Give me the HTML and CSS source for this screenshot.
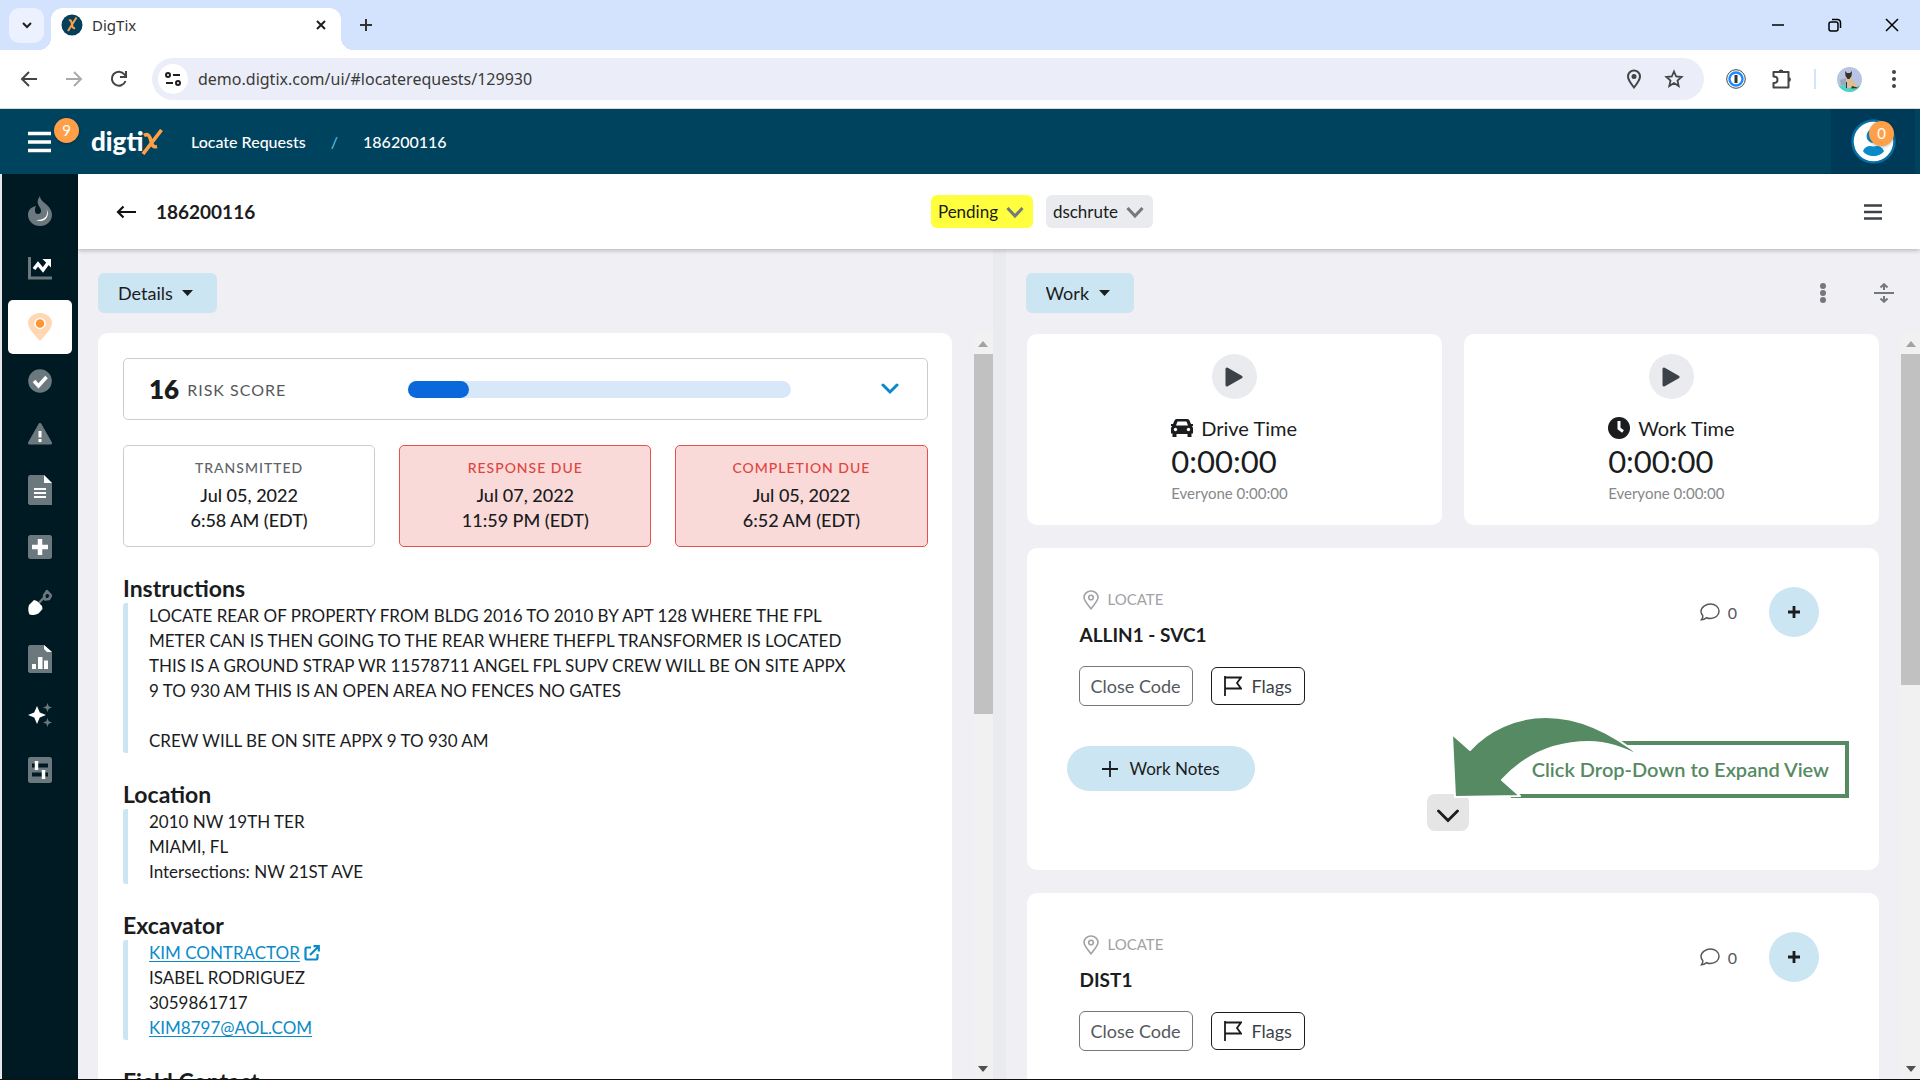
FILE: index.html
```
<!DOCTYPE html>
<html lang="en">
<head>
	<meta charset="UTF-8">
	<title>DigTix</title>
	<link rel="stylesheet" href="styles.css">
</head>
<body>
	<!-- browser window -->
	<div class="tabs">
		<button class="tab-search" aria-label="Search tabs"><svg width="12" height="8" viewBox="0 0 12 8"><path d="M2 2l4 4 4-4" fill="none" stroke="#1f1f1f" stroke-width="2"/></svg></button>
		<div class="tab">
			<svg width="22" height="22" viewBox="0 0 22 22"><circle cx="11" cy="11" r="10.500" fill="#04405a"/><path d="M15.500 3.500L7 17M8 6.500c2-1 2.500 1 3 4s1.500 4 3 3.500" fill="none" stroke="#ff9f47" stroke-width="2"/></svg>
			<span class="tab-name">DigTix</span>
			<button aria-label="Close tab"><svg width="12" height="12" viewBox="0 0 12 12"><path d="M2 2l8 8M10 2l-8 8" stroke="#1f1f1f" stroke-width="2"/></svg></button>
		</div>
		<button class="tab-new" aria-label="New tab"><svg width="14" height="14" viewBox="0 0 14 14"><path d="M7 1v12M1 7h12" stroke="#333" stroke-width="2"/></svg></button>
		<div class="win">
			<button aria-label="Minimize"><svg width="14" height="14" viewBox="0 0 14 14"><path d="M1 7h12" stroke="#000" stroke-width="1.500"/></svg></button>
			<button aria-label="Restore"><svg width="14" height="14" viewBox="0 0 14 14"><rect x="1" y="4" width="9" height="9" rx="2" fill="none" stroke="#000" stroke-width="1.500"/><path d="M4 1.500h5.500a3 3 0 0 1 3 3V10" fill="none" stroke="#000" stroke-width="1.500"/></svg></button>
			<button aria-label="Close"><svg width="14" height="14" viewBox="0 0 14 14"><path d="M1 1l12 12M13 1L1 13" stroke="#000" stroke-width="1.500"/></svg></button>
		</div>
	</div>
	<div class="toolbar">
		<button aria-label="Back"><svg width="18" height="18" viewBox="0 0 18 18"><path d="M17 9H2.500M9 2L2 9l7 7" fill="none" stroke="#444" stroke-width="2"/></svg></button>
		<button aria-label="Forward"><svg width="18" height="18" viewBox="0 0 18 18"><path d="M1 9h14.500M9 2l7 7-7 7" fill="none" stroke="#aaa" stroke-width="2"/></svg></button>
		<button aria-label="Reload"><svg width="18" height="18" viewBox="0 0 18 18"><path d="M15.500 11A7 7 0 1 1 14.500 4.500L16 6.500M16 1v6h-6" fill="none" stroke="#444" stroke-width="2"/></svg></button>
		<div class="omni">
			<span class="site"><svg width="16" height="16" viewBox="0 0 16 16"><g fill="none" stroke="#1f1f1f" stroke-width="2"><circle cx="3" cy="4" r="2"/><path d="M8 4h7M1 12h7"/><circle cx="13" cy="12" r="2"/></g></svg></span>
			<input type="text" aria-label="Address" value="demo.digtix.com/ui/#locaterequests/129930">
			<button aria-label="Location"><svg width="16" height="20" viewBox="0 0 16 20"><path d="M8 18.500C4 13.500 2 10.500 2 7.500a6 6 0 0 1 12 0c0 3-2 6-6 11z" fill="none" stroke="#444" stroke-width="2"/><circle cx="8" cy="7.500" r="2.500" fill="#444"/></svg></button>
			<button aria-label="Bookmark"><svg width="20" height="20" viewBox="0 0 20 20"><path d="M10 2.500l2.200 5 5.400.5-4.100 3.600 1.200 5.400-4.700-2.900L5.300 17l1.200-5.400L2.400 8l5.400-.5z" fill="none" stroke="#444" stroke-width="1.800"/></svg></button>
		</div>
		<div class="exts">
			<button aria-label="1Password"><svg width="20" height="20" viewBox="0 0 20 20"><circle cx="10" cy="10" r="9.300" fill="#fff" stroke="#444"/><circle cx="10" cy="10" r="6.500" fill="#fff" stroke="#1a8cff" stroke-width="2.400"/><path d="M10 6v8" stroke="#333" stroke-width="3"/></svg></button>
			<button class="puzzle" aria-label="Extensions"><svg width="22" height="22" viewBox="0 0 22 22"><path d="M2.500 4h15v15.500h-15v-4.500c3 0 4-1.500 4-3.300S5.500 8.500 2.500 8.500z" fill="none" stroke="#444" stroke-width="2" stroke-linejoin="round"/><path d="M7.500 4a2.500 2.500 0 0 1 5 0zM17.500 9a2.500 2.500 0 0 1 0 5z" fill="#444"/></svg></button>
			<span class="line"></span>
			<svg width="25" height="25" viewBox="0 0 25 25"><clipPath id="face"><circle cx="12.500" cy="12.500" r="12.500"/></clipPath><g clip-path="url(#face)"><path fill="#b9c4e3" d="M0 0h25v25H0z"/><path fill="#4ed3c8" d="M0 19l8-1 17 1v6H0z"/><path fill="#9da6bc" d="M3 13l6-2v7H4z"/><path fill="#d9bf94" d="M9 8h5l1 5 4 3 2 5H10z"/><path fill="#3b312b" d="M8 4l2 2h3l2-2-.5 5-2 3h-2L8.500 9zM15 19l7 2-8 .5zM9 15h1v6H9z"/></g></svg>
			<button class="dots" aria-label="Menu"><svg width="6" height="20" viewBox="0 0 6 20" fill="#444"><circle cx="3" cy="3" r="2"/><circle cx="3" cy="10" r="2"/><circle cx="3" cy="17" r="2"/></svg></button>
		</div>
	</div>

	<!-- app header -->
	<header class="head">
		<button class="nav-btn" aria-label="Navigation">
			<svg width="23" height="22" viewBox="0 0 23 22"><path d="M0 2.500h23M0 11h23M0 19.500h23" stroke="#fff" stroke-width="3.600"/></svg>
			<span class="badge">9</span>
		</button>
		<a class="logo" href="#" aria-label="digtix">digti<svg width="22" height="26" viewBox="0 0 22 26"><path d="M20.500 1L2 25M3 6.500c4.500-2.500 6 1 7 5.500s2 6.500 6 5.500" fill="none" stroke="#ff9f47" stroke-width="3.600"/></svg></a>
		<nav class="crumbs">
			<a href="#">Locate Requests</a>
			<span class="slash">/</span>
			<a href="#">186200116</a>
		</nav>
		<button class="me" aria-label="Account">
			<svg width="45" height="45" viewBox="0 0 45 45"><circle cx="22.500" cy="22.500" r="21" fill="#fff" stroke="#0370a3" stroke-width="2.500"/><circle cx="22.500" cy="17" r="7" fill="#0a8bc9"/><path d="M12 32c2-4.500 6-6 10.500-4.500C27 26 31 27.500 33 32c-2 3.500-6 5-10.500 5S14 35.500 12 32z" fill="#0a8bc9"/></svg>
			<span class="badge">0</span>
		</button>
	</header>

	<div class="app">
		<nav class="side">
			<a href="#" aria-label="Hot"><svg width="24" height="30" viewBox="0 0 24 30"><path d="M12 0c-2 3-3 5-2 8 1 3 3 4 3 7a3 3 0 0 1-6 0c0-2 0-3 1-5-5 1-8 4-8 9a12 11 0 0 0 24 0c0-4-2-7-5-10S12 4 12 0z" fill="#6b797e"/><path d="M18.500 13c2 6-1 11.500-10.500 11 8 4 15-4 10.500-11z" fill="#fff"/></svg></a>
			<a href="#" aria-label="Trends"><svg width="24" height="24" viewBox="0 0 24 24"><path d="M1.500 1v21H24" fill="none" stroke="#6b797e" stroke-width="3"/><path d="M6 13l4-5 5 6 5-7" fill="none" stroke="#fff" stroke-width="3.500"/><path d="M14.500 3H23v8.500z" fill="#fff"/></svg></a>
			<a class="on" href="#" aria-label="Locates"><svg width="24" height="28" viewBox="0 0 24 28"><path d="M12 28C4 19 0 15 0 10a12 10 0 0 1 24 0c0 5-4 9-12 18z" fill="#ffd7b3"/><circle cx="12" cy="10.500" r="5" fill="#ff9433" stroke="#fff" stroke-width="1.500"/></svg></a>
			<a href="#" aria-label="Completed"><svg width="24" height="24" viewBox="0 0 24 24"><circle cx="12" cy="12" r="11.800" fill="#6b797e"/><path d="M6 12l4.500 5L18.500 8" fill="none" stroke="#fff" stroke-width="3.500"/></svg></a>
			<a href="#" aria-label="Alerts"><svg width="24" height="22" viewBox="0 0 24 22"><path d="M12 1.500L22.500 20h-21z" fill="#6b797e" stroke="#6b797e" stroke-width="3" stroke-linejoin="round"/><path d="M12 8v6.500M12 16v3" stroke="#fff" stroke-width="3"/></svg></a>
			<a href="#" aria-label="Documents"><svg width="24" height="30" viewBox="0 0 24 30"><path d="M1.500 0H16l8 8v22H1.500L0 28.500v-27z" fill="#6b797e"/><path d="M16 0l8 8h-8zM6 13h12v2H6zM6 17h12v2H6zM6 21h12v2H6z" fill="#fff"/></svg></a>
			<a href="#" aria-label="Add"><svg width="24" height="24" viewBox="0 0 24 24"><rect width="24" height="24" rx="2.500" fill="#6b797e"/><path d="M12 4v16M4 12h16" stroke="#fff" stroke-width="4.500"/></svg></a>
			<a href="#" aria-label="Excavation"><svg width="24" height="26" viewBox="0 0 24 26"><path d="M8 17l9-9.500" stroke="#6b797e" stroke-width="2.500"/><path d="M16 6.500l3-4.500 4 4.500-2 3.500-4 .5z" fill="none" stroke="#6b797e" stroke-width="2.600" stroke-linejoin="round"/><path d="M1 16l5-5 3 1 5 5 .5 3-4 4.500c-3 1.500-6 2-9 1-1.500-3-1.500-7-.5-9.500z" fill="#fff"/></svg></a>
			<a href="#" aria-label="Reports"><svg width="24" height="28" viewBox="0 0 24 28"><path d="M1.500 0H16l8 7v21H1.500L0 26.500v-25z" fill="#6b797e"/><path d="M16 0l8 7h-5l-3-3zM4 19h4v5H4zM10 12h4.500v12H10zM16 15.500h4V24h-4z" fill="#fff"/></svg></a>
			<a href="#" aria-label="Insights"><svg width="24" height="24" viewBox="0 0 24 24"><path d="M9 3l2.800 6.500L18 12l-6.200 2.500L9 21l-2.800-6.500L0 12l6.200-2.500z" fill="#fff"/><path d="M19.500 0l1.200 3.300L24 4.500l-3.300 1.200L19.500 9l-1.200-3.300L15 4.500l3.300-1.200zM19.500 15l1.200 3.300 3.300 1.200-3.300 1.200-1.200 3.300-1.200-3.300-3.300-1.200 3.300-1.200z" fill="#6b797e"/></svg></a>
			<a href="#" aria-label="Settings"><svg width="24" height="26" viewBox="0 0 24 26"><rect width="24" height="26" rx="2.500" fill="#6b797e"/><path d="M4 8.500h16M4 17.500h16" stroke="#001a23" stroke-width="4"/><path d="M8.500 4v9M15.500 13v9" stroke="#fff" stroke-width="3.500"/></svg></a>
		</nav>

		<main class="main">
			<div class="bar">
				<div class="bar-left">
					<button aria-label="Go back"><svg width="20" height="14" viewBox="0 0 20 14"><path d="M20 7H2M7.500 1.500L2 7l5.500 5.500" fill="none" stroke="#111" stroke-width="2.200"/></svg></button>
					<h1>186200116</h1>
				</div>
				<div class="chips">
					<div class="pick chip yellow">
						<select aria-label="Status"><option>Pending</option></select>
						<svg width="18" height="12" viewBox="0 0 18 12"><path d="M1.500 2L9 10l7.500-8" fill="none" stroke="#74777c" stroke-width="3"/></svg>
					</div>
					<div class="pick chip">
						<select aria-label="Assigned to"><option>dschrute</option></select>
						<svg width="18" height="12" viewBox="0 0 18 12"><path d="M1.500 2L9 10l7.500-8" fill="none" stroke="#74777c" stroke-width="3"/></svg>
					</div>
				</div>
				<button class="bar-menu" aria-label="More"><svg width="18" height="18" viewBox="0 0 18 18"><path d="M0 2.500h18M0 9h18M0 15.500h18" stroke="#3c4248" stroke-width="2.600"/></svg></button>
			</div>

			<div class="panels">
				<section class="panel">
					<div class="panel-top">
						<div class="pick big">
							<select aria-label="Left view"><option>Details</option></select>
							<svg width="11" height="6" viewBox="0 0 11 6"><path d="M0 0h11L5.500 6z" fill="#1a1c1e"/></svg>
						</div>
					</div>
					<div class="scroll">
						<div class="details">
							<div class="risk">
								<span class="risk-num">16</span>
								<span class="risk-name">RISK SCORE</span>
								<div class="meter"><div class="meter-fill" style="width:16%"></div></div>
								<button aria-label="Expand risk score"><svg width="18" height="12" viewBox="0 0 18 12"><path d="M2 2l7 7 7-7" fill="none" stroke="#0a8bc9" stroke-width="3" stroke-linecap="round"/></svg></button>
							</div>
							<div class="dates">
								<div class="date"><h3>TRANSMITTED</h3><p>Jul 05, 2022</p><p>6:58 AM (EDT)</p></div>
								<div class="date late"><h3>RESPONSE DUE</h3><p>Jul 07, 2022</p><p>11:59 PM (EDT)</p></div>
								<div class="date late"><h3>COMPLETION DUE</h3><p>Jul 05, 2022</p><p>6:52 AM (EDT)</p></div>
							</div>
							<h2>Instructions</h2>
							<div class="info">
								LOCATE REAR OF PROPERTY FROM BLDG 2016 TO 2010 BY APT 128 WHERE THE FPL<br>
								METER CAN IS THEN GOING TO THE REAR WHERE THEFPL TRANSFORMER IS LOCATED<br>
								THIS IS A GROUND STRAP WR 11578711 ANGEL FPL SUPV CREW WILL BE ON SITE APPX<br>
								9 TO 930 AM THIS IS AN OPEN AREA NO FENCES NO GATES<br>
								<br>
								CREW WILL BE ON SITE APPX 9 TO 930 AM
							</div>
							<h2>Location</h2>
							<div class="info">
								2010 NW 19TH TER<br>
								MIAMI, FL<br>
								Intersections: NW 21ST AVE
							</div>
							<h2>Excavator</h2>
							<div class="info">
								<a href="#">KIM CONTRACTOR</a>
								<svg class="out" width="16" height="16" viewBox="0 0 16 16"><path d="M7 2.500H3A1.500 1.500 0 0 0 1.500 4v9A1.500 1.500 0 0 0 3 14.500h9a1.500 1.500 0 0 0 1.500-1.500V9M6 10l8-8M9.500 1.200h5.300v5.300" fill="none" stroke="#0a8bc9" stroke-width="2.200"/></svg><br>
								ISABEL RODRIGUEZ<br>
								3059861717<br>
								<a href="#">KIM8797@AOL.COM</a>
							</div>
							<h2>Field Contact</h2>
						</div>
						<div class="sbar">
							<svg width="10" height="6" viewBox="0 0 10 6"><path d="M0 6h10L5 0z" fill="#a3a3a3"/></svg>
							<div class="sbar-track"><div class="thumb thumb-left"></div></div>
							<svg width="10" height="6" viewBox="0 0 10 6"><path d="M0 0h10L5 6z" fill="#505050"/></svg>
						</div>
					</div>
				</section>
				<div class="split"></div>
				<section class="panel">
					<div class="panel-top">
						<div class="pick big">
							<select aria-label="Right view"><option>Work</option></select>
							<svg width="11" height="6" viewBox="0 0 11 6"><path d="M0 0h11L5.500 6z" fill="#1a1c1e"/></svg>
						</div>
						<div class="tools">
							<button aria-label="Options"><svg width="6" height="20" viewBox="0 0 6 20" fill="#74777c"><circle cx="3" cy="3" r="3"/><circle cx="3" cy="10" r="3"/><circle cx="3" cy="17" r="3"/></svg></button>
							<button aria-label="Expand all"><svg width="20" height="20" viewBox="0 0 20 20"><path d="M0 10h20M10 7V2M6.500 4.500L10 1.200l3.500 3.300M10 13v5M6.500 15.500l3.500 3.300 3.500-3.300" fill="none" stroke="#74777c" stroke-width="2"/></svg></button>
						</div>
					</div>
					<div class="scroll">
						<div class="work">
							<div class="timers">
								<div class="card timer">
									<button class="play" aria-label="Start drive time"><svg width="18" height="20" viewBox="0 0 18 20"><path d="M2 2v16l14-8z" fill="#3c4248" stroke="#3c4248" stroke-width="3" stroke-linejoin="round"/></svg></button>
									<div class="timer-text">
										<div class="timer-name"><svg width="22" height="18" viewBox="0 0 22 18"><path d="M5.500 0h11q1.500 0 2 1.500L20 5h2v2h-1l1 2v5.500h-1.500V18h-4v-3h-11v3h-4v-3.500H0V9l1-2H0V5h2l1.500-3.500Q4 0 5.500 0z" fill="#1a1c1e"/><path d="M6.500 2.500h9L17 6.500H5z" fill="#fff"/><circle cx="4.500" cy="10.500" r="1.700" fill="#fff"/><circle cx="17.500" cy="10.500" r="1.700" fill="#fff"/></svg>Drive Time</div>
										<div class="timer-num">0:00:00</div>
										<div class="timer-all">Everyone 0:00:00</div>
									</div>
								</div>
								<div class="card timer">
									<button class="play" aria-label="Start work time"><svg width="18" height="20" viewBox="0 0 18 20"><path d="M2 2v16l14-8z" fill="#3c4248" stroke="#3c4248" stroke-width="3" stroke-linejoin="round"/></svg></button>
									<div class="timer-text">
										<div class="timer-name"><svg width="22" height="22" viewBox="0 0 22 22"><circle cx="11" cy="11" r="11" fill="#1a1c1e"/><path d="M11 4v7.500l4 3" fill="none" stroke="#fff" stroke-width="3"/></svg>Work Time</div>
										<div class="timer-num">0:00:00</div>
										<div class="timer-all">Everyone 0:00:00</div>
									</div>
								</div>
							</div>

							<article class="card job">
								<div class="job-main">
									<div class="kind"><svg width="16" height="20" viewBox="0 0 16 20"><path d="M8 18.800C4 13.500 1 10.500 1 7.500a7 6.500 0 0 1 14 0c0 3-3 6-7 11.300z" fill="none" stroke="#a0a2a5" stroke-width="1.600"/><circle cx="8" cy="7.500" r="2.300" fill="none" stroke="#a0a2a5" stroke-width="1.600"/></svg>LOCATE</div>
									<h4>ALLIN1 - SVC1</h4>
									<div class="job-btns">
										<button class="code">Close Code</button>
										<button class="flag"><svg width="18" height="20" viewBox="0 0 18 20"><path d="M1 0v20M1 1.500h16l-4 5.500 4 5.500H1" fill="none" stroke="#1a1c1e" stroke-width="1.800"/></svg>Flags</button>
									</div>
									<button class="notes"><svg width="16" height="16" viewBox="0 0 16 16"><path d="M8 0v16M0 8h16" stroke="#1a1c1e" stroke-width="1.800"/></svg>Work Notes</button>
								</div>
								<div class="job-side">
									<span class="talk"><svg width="20" height="18" viewBox="0 0 20 18"><path d="M10.500 1C15 1 19 4 19 8.300s-4 7.200-8.500 7.200c-1.500 0-3-.3-4.200-.8-1.200 1.200-2.800 2-4.800 2 1-1.200 1.400-2.700 1.300-4C1.700 11.500 1 10 1 8.300 1 4 6 1 10.500 1z" fill="none" stroke="#55585c" stroke-width="1.500"/></svg>0</span>
									<button class="plus" aria-label="Add"><svg width="12" height="14" viewBox="0 0 12 14"><path d="M6 1v12M0 7h12" stroke="#1a1c1e" stroke-width="2.800"/></svg></button>
								</div>
								<button class="more" aria-label="Expand"><svg width="22" height="14" viewBox="0 0 22 14"><path d="M1.500 2l9.500 9.500L20.500 2" fill="none" stroke="#1a1c1e" stroke-width="2.800" stroke-linecap="round"/></svg></button>
								<!-- hint lies over the card -->
								<div class="hint">
									<p>Click Drop-Down to Expand View</p>
									<svg width="200" height="86" viewBox="0 0 200 86"><path d="M53 64C75 40 105 26 140 26 156 27 174 31 194 42V45H70z" fill="#fff"/><path d="M3 18L21 34C39 14 67 1 97 1 127 1 160 14 194 42 174 31 156 26 140 26 105 26 75 40 53 64L71 80 6 81z" fill="#568a63" stroke="#fff" stroke-width="2" stroke-linejoin="round"/></svg>
								</div>
							</article>

							<article class="card job">
								<div class="job-main">
									<div class="kind"><svg width="16" height="20" viewBox="0 0 16 20"><path d="M8 18.800C4 13.500 1 10.500 1 7.500a7 6.500 0 0 1 14 0c0 3-3 6-7 11.300z" fill="none" stroke="#a0a2a5" stroke-width="1.600"/><circle cx="8" cy="7.500" r="2.300" fill="none" stroke="#a0a2a5" stroke-width="1.600"/></svg>LOCATE</div>
									<h4>DIST1</h4>
									<div class="job-btns">
										<button class="code">Close Code</button>
										<button class="flag"><svg width="18" height="20" viewBox="0 0 18 20"><path d="M1 0v20M1 1.500h16l-4 5.500 4 5.500H1" fill="none" stroke="#1a1c1e" stroke-width="1.800"/></svg>Flags</button>
									</div>
								</div>
								<div class="job-side">
									<span class="talk"><svg width="20" height="18" viewBox="0 0 20 18"><path d="M10.500 1C15 1 19 4 19 8.300s-4 7.200-8.500 7.200c-1.500 0-3-.3-4.200-.8-1.200 1.200-2.800 2-4.800 2 1-1.200 1.400-2.700 1.300-4C1.700 11.500 1 10 1 8.300 1 4 6 1 10.500 1z" fill="none" stroke="#55585c" stroke-width="1.500"/></svg>0</span>
									<button class="plus" aria-label="Add"><svg width="12" height="14" viewBox="0 0 12 14"><path d="M6 1v12M0 7h12" stroke="#1a1c1e" stroke-width="2.800"/></svg></button>
								</div>
							</article>
						</div>
						<div class="sbar">
							<svg width="10" height="6" viewBox="0 0 10 6"><path d="M0 6h10L5 0z" fill="#a3a3a3"/></svg>
							<div class="sbar-track"><div class="thumb thumb-right"></div></div>
							<svg width="10" height="6" viewBox="0 0 10 6"><path d="M0 0h10L5 6z" fill="#505050"/></svg>
						</div>
					</div>
				</section>
			</div>
		</main>
	</div>
</body>
</html>
```
FILE: styles.css
```
*{
	margin: 0;
	padding: 0;
	box-sizing: border-box;
}
body{
	display: flex;
	flex-direction: column;
	height: 100vh;
	overflow: hidden;
	border-bottom: 1px solid #111;
	background-color: #fff;
	color: #1a1c1e;
	font-family: Lato, "Liberation Sans", sans-serif;
	font-size: 18px;
	line-height: 25px;
}
button{
	border: none;
	background: none;
	color: inherit;
	font: inherit;
	display: flex;
	align-items: center;
	justify-content: center;
}
svg{
	display: block;
	flex: none;
}
a{
	color: inherit;
	text-decoration: none;
}

/* browser window */
.tabs{
	flex: none;
	display: flex;
	align-items: center;
	height: 50px;
	padding-left: 9px;
	background-color: #d3e3fd;
	font-family: "Noto Sans", sans-serif;
	font-size: 15px;
}
.tab-search{
	width: 35px;
	height: 35px;
	margin-right: 7px;
	border-radius: 10px;
	background-color: #ebf1fe;
}
.tab{
	display: flex;
	align-items: center;
	align-self: flex-end;
	gap: 9px;
	width: 290px;
	height: 42px;
	padding: 0 14px 8px 10px;
	border-radius: 12px 12px 0 0;
	background-color: #fff;
	position: relative;
}
/* curved feet of the tab */
.tab:before,.tab:after{
	content: "";
	position: absolute;
	bottom: 0;
	width: 12px;
	height: 12px;
}
.tab:before{
	left: -12px;
	background: radial-gradient(circle at 0 0, transparent 12px, #fff 12px);
}
.tab:after{
	right: -12px;
	background: radial-gradient(circle at 100% 0, transparent 12px, #fff 12px);
}
.tab-name{
	flex: 1;
	color: #333;
}
.tab-new{
	margin-left: 18px;
}
.win{
	display: flex;
	margin-left: auto;
}
.win button{
	width: 57px;
	height: 50px;
}
.toolbar{
	flex: none;
	display: flex;
	align-items: center;
	height: 59px;
	padding: 0 23px 0 20px;
	gap: 27px;
	border-bottom: 1px solid #d6dbd8;
}
.omni{
	flex: 1;
	display: flex;
	align-items: center;
	height: 42px;
	margin: 0 -5px 0 -3px;
	padding: 0 20px 0 6px;
	border-radius: 21px;
	background-color: #ebeef8;
}
.site{
	display: flex;
	align-items: center;
	justify-content: center;
	width: 30px;
	height: 30px;
	border-radius: 50%;
	background-color: #fff;
}
.omni input{
	flex: 1;
	margin-left: 10px;
	border: none;
	outline: none;
	background: none;
	color: #3a3a3a;
	font-family: "Noto Sans", sans-serif;
	font-size: 16px;
}
.omni button{
	margin-left: 22px;
}
.exts{
	display: flex;
	align-items: center;
	gap: 21px;
}
.puzzle{
	margin-left: 4px;
}
.dots{
	margin-left: 8px;
}
.line{
	width: 2px;
	height: 20px;
	background-color: #d3e3fd;
}

/* app header */
.head{
	flex: none;
	display: flex;
	align-items: center;
	height: 65px;
	padding: 0 5px 0 28px;
	background-color: #00435f;
	color: #fff;
}
.nav-btn,.me{
	position: relative;
}
.badge{
	position: absolute;
	width: 25px;
	height: 25px;
	border-radius: 50%;
	background-color: #ff9f47;
	color: #fff;
	font-size: 15px;
	line-height: 25px;
	text-align: center;
	box-shadow: 0 1px 3px rgba(0,0,0,.3);
}
.nav-btn .badge{
	left: 26px;
	top: -13px;
}
.logo{
	display: flex;
	align-items: center;
	width: 100px;
	margin-left: 40px;
	font-size: 26px;
	font-weight: 900;
}
.logo svg{
	margin-left: -2px;
}
.crumbs{
	display: flex;
	gap: 25px;
	font-size: 16px;
	font-weight: 500;
}
.slash{
	color: #5cb8e0;
}
.me{
	width: 84px;
	height: 65px;
	margin-left: auto;
	background-color: #003a59;
}
.me .badge{
	left: 38px;
	top: 12px;
}

/* side navigation */
.app{
	flex: 1;
	display: flex;
	min-height: 0;
}
.side{
	flex: none;
	display: flex;
	flex-direction: column;
	align-items: center;
	width: 78px;
	padding-top: 7px;
	border-left: 2px solid #e8e8ea;
	background-color: #001a23;
}
.side a{
	display: flex;
	justify-content: center;
	width: 64px;
	padding: 15px 0;
}
.side .on{
	margin-top: 5px;
	padding: 13px 0;
	border-radius: 5px;
	background-color: #fff;
}

/* title bar */
.main{
	flex: 1;
	display: flex;
	flex-direction: column;
	min-width: 0;
}
.bar{
	flex: none;
	display: grid;
	grid-template-columns: 19fr auto 17fr;
	align-items: center;
	height: 75px;
	padding: 0 38px;
	background-color: #fff;
	box-shadow: 0 2px 4px rgba(0,0,0,.2);
	z-index: 1;
}
.bar-left{
	display: flex;
	align-items: center;
	gap: 20px;
}
h1{
	font-size: 19px;
	font-weight: 700;
}
.bar-menu{
	justify-self: end;
}
.chips{
	display: flex;
	gap: 13px;
}
.pick{
	position: relative;
	display: flex;
	align-items: center;
}
.pick select{
	appearance: none;
	border: none;
	border-radius: 6px;
	color: #1a1c1e;
	font: inherit;
}
.pick svg{
	position: absolute;
	pointer-events: none;
}
.chip select{
	height: 33px;
	padding: 0 34px 0 7px;
	background-color: #eaebef;
	font-size: 17px;
}
.chip svg{
	right: 9px;
}
.yellow select{
	background-color: #ffff3d;
}
.big select{
	height: 40px;
	padding: 0 44px 0 20px;
	background-color: #cce5f2;
	font-size: 18px;
}
.big svg{
	right: 24px;
}

/* panels */
.panels{
	flex: 1;
	display: flex;
	min-height: 0;
	background-color: #efeff4;
}
.panel{
	flex: 1;
	display: flex;
	flex-direction: column;
	min-width: 0;
	padding: 24px 0 0 20px;
}
.split{
	width: 13px;
	background-color: #e9ebee;
}
.panel-top{
	display: flex;
	align-items: center;
	justify-content: space-between;
	margin-bottom: 20px;
}
.tools{
	display: flex;
	align-items: center;
	gap: 48px;
	padding-right: 26px;
}
.scroll{
	flex: 1;
	display: flex;
	gap: 22px;
	min-height: 0;
}
.sbar{
	flex: none;
	display: flex;
	flex-direction: column;
	align-items: center;
	width: 19px;
	padding: 8px 0 7px;
	background-color: #f1f1f1;
}
.sbar-track{
	flex: 1;
	align-self: stretch;
	padding: 7px 0;
}
.thumb{
	background-color: #c1c1c1;
}
.thumb-left{
	height: 51%;
}
.thumb-right{
	height: 47%;
}

/* details */
.details{
	flex: 1;
	min-width: 0;
	padding: 25px 24px 0 25px;
	border-radius: 10px 10px 0 0;
	background-color: #fff;
	overflow: hidden;
}
.risk{
	display: flex;
	align-items: center;
	height: 62px;
	padding: 0 28px 0 25px;
	border: 1px solid #ccc;
	border-radius: 5px;
}
.risk-num{
	font-size: 26px;
	font-weight: 800;
}
.risk-name{
	margin-left: 8px;
	color: #55585c;
	font-size: 16px;
	letter-spacing: 1px;
}
.meter{
	width: 51%;
	height: 17px;
	margin: 0 90px 0 auto;
	border-radius: 9px;
	background-color: #d9e8f9;
}
.meter-fill{
	height: 17px;
	border-radius: 9px;
	background-color: #0a68db;
}
.dates{
	display: flex;
	gap: 24px;
	margin: 25px 0 26px;
}
.date{
	flex: 1;
	height: 102px;
	padding-top: 9px;
	border: 1px solid #ccc;
	border-radius: 5px;
	text-align: center;
	font-size: 18px;
	font-weight: 500;
}
.date h3{
	margin-bottom: 3px;
	color: #606368;
	font-size: 14px;
	font-weight: 500;
	letter-spacing: 1px;
}
.date.late{
	border-color: #e4524e;
	background-color: #f9dad9;
}
.late h3{
	color: #e0443f;
}
h2{
	font-size: 23px;
	font-weight: 700;
	line-height: 30px;
}
.info{
	margin-bottom: 26px;
	padding-left: 21px;
	border-left: 5px solid #cce5f2;
	border-radius: 3px;
	white-space: nowrap;
	font-size: 17px;
}
.info a{
	color: #0a8bc9;
	text-decoration: underline;
	text-underline-offset: 2px;
}
.out{
	display: inline-block;
	vertical-align: -2px;
}

/* work */
.work{
	flex: 1;
	min-width: 0;
	padding: 1px 0 0 1px;
	overflow: hidden;
}
.card{
	border-radius: 10px;
	background-color: #fff;
}
.timers{
	display: flex;
	gap: 22px;
	margin-bottom: 23px;
}
.timer{
	flex: 1;
	display: flex;
	flex-direction: column;
	align-items: center;
	height: 191px;
	padding-top: 20px;
}
.play{
	width: 45px;
	height: 45px;
	margin-bottom: 14px;
	border-radius: 50%;
	background-color: #eaebef;
}
.timer-name{
	display: flex;
	align-items: center;
	gap: 8px;
	height: 30px;
	font-size: 20px;
}
.timer-num{
	font-size: 31px;
	line-height: 36px;
}
.timer-all{
	color: #85888c;
	font-size: 15px;
	line-height: 28px;
}
.job{
	position: relative;
	display: flex;
	justify-content: space-between;
	min-height: 322px;
	margin-bottom: 23px;
	padding: 39px 60px 0 40px;
}
.kind{
	display: flex;
	align-items: center;
	gap: 9px;
	margin-left: 16px;
	color: #a0a2a5;
	font-size: 15px;
}
h4{
	margin: 10px 0 19px 13px;
	font-size: 19px;
	font-weight: 700;
}
.job-btns{
	display: flex;
	align-items: center;
	gap: 18px;
	margin-left: 12px;
}
.code,.flag{
	height: 40px;
	padding: 0 11px;
	border: 1px solid #74777c;
	border-radius: 6px;
	color: #55585c;
	font-size: 18px;
}
.flag{
	gap: 10px;
	height: 38px;
	padding: 0 12px;
	border-color: #1a1c1e;
	color: #3c4248;
}
.notes{
	gap: 12px;
	height: 45px;
	margin-top: 40px;
	padding: 0 35px;
	border-radius: 23px;
	background-color: #cce5f2;
	font-size: 17px;
}
.job-side{
	display: flex;
	align-items: center;
	gap: 32px;
	height: 50px;
}
.talk{
	display: flex;
	align-items: center;
	gap: 8px;
	color: #55585c;
	font-size: 16px;
}
.plus{
	width: 50px;
	height: 50px;
	border-radius: 50%;
	background-color: #cce5f2;
}
.more{
	position: absolute;
	left: 47%;
	bottom: 39px;
	width: 42px;
	height: 37px;
	padding-top: 6px;
	border-radius: 8px;
	background-color: #e5e5e5;
}
.hint{
	position: absolute;
	right: 30px;
	bottom: 72px;
	width: 400px;
	padding-left: 62px;
}
.hint p{
	height: 57px;
	padding-right: 16px;
	border: 4px solid #568a63;
	border-left: none;
	background-color: #fff;
	color: #568a63;
	font-size: 20px;
	font-weight: 600;
	line-height: 49px;
	text-align: right;
	white-space: nowrap;
}
.hint svg{
	position: absolute;
	left: 0;
	bottom: -4px;
}
```
